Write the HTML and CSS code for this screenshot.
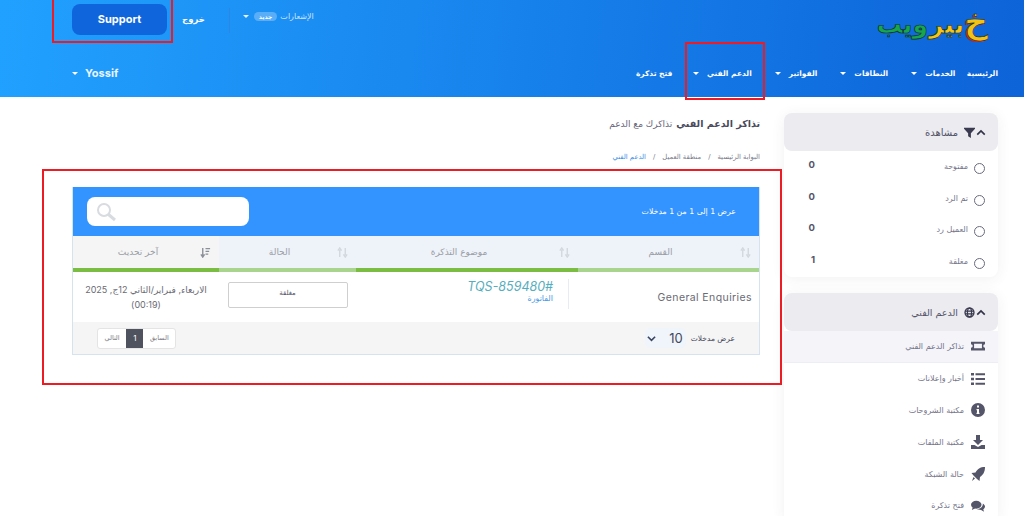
FILE: index.html
```html
<!DOCTYPE html>
<html lang="ar" dir="rtl">
<head>
<meta charset="utf-8">
<title>تذاكر الدعم الفني</title>
<link rel="stylesheet" href="styles.css">
</head>
<body>
<header class="header">
  <div class="top-row">
    <div class="logo"><span class="logo-kh">خ</span><span class="logo-y">بير</span><span class="logo-g">ويب</span></div>
    <div class="top-actions">
      <div class="notif"><span>الإشعارات</span><span class="badge">جديد</span><i class="caret caret-dim"></i></div>
      <span class="top-divider"></span>
      <a class="logout">خروج</a>
      <a class="support">Support</a>
    </div>
  </div>
  <div class="nav-row">
    <nav class="nav">
      <a class="nav-item nav-first">الرئيسية</a>
      <a class="nav-item">الخدمات<i class="caret"></i></a>
      <a class="nav-item">النطاقات<i class="caret"></i></a>
      <a class="nav-item">الفواتير<i class="caret"></i></a>
      <a class="nav-item">الدعم الفني<i class="caret"></i></a>
      <a class="nav-item nav-last">فتح تذكرة</a>
    </nav>
    <a class="user">Yossif<i class="caret"></i></a>
  </div>
</header>

<div class="layout">
  <aside class="sidebar">
    <section class="panel">
      <h3 class="panel-head">
        <svg class="chev" viewBox="0 0 12 8"><path d="M1.500 6.500 6 2l4.500 4.500" fill="none" stroke="#33334a" stroke-width="2"/></svg>
        <svg class="head-icon" viewBox="0 0 16 16"><path d="M0 1h16v1.500L10 9v7l-4-2.500V9L0 2.500z" fill="#3a3a50"/></svg>
        <span>مشاهدة</span>
      </h3>
      <ul class="filter-list">
        <li class="filter"><i class="radio"></i><span class="filter-name">مفتوحة</span><b class="count">0</b></li>
        <li class="filter"><i class="radio"></i><span class="filter-name">تم الرد</span><b class="count">0</b></li>
        <li class="filter"><i class="radio"></i><span class="filter-name">العميل رد</span><b class="count">0</b></li>
        <li class="filter"><i class="radio"></i><span class="filter-name">مغلقة</span><b class="count">1</b></li>
      </ul>
    </section>
    <section class="panel">
      <h3 class="panel-head">
        <svg class="chev" viewBox="0 0 12 8"><path d="M1.500 6.500 6 2l4.500 4.500" fill="none" stroke="#33334a" stroke-width="2"/></svg>
        <svg class="head-icon" viewBox="0 0 16 16"><circle cx="8" cy="8" r="6.500" fill="none" stroke="#3a3a50" stroke-width="2"/><ellipse cx="8" cy="8" rx="3" ry="6.500" fill="none" stroke="#3a3a50" stroke-width="1.800"/><path d="M1.500 6h13M1.500 10h13" stroke="#3a3a50" stroke-width="1.800"/></svg>
        <span class="head-narrow">الدعم الفني</span>
      </h3>
      <ul class="menu-list">
        <li class="menu-item menu-active"><svg class="menu-icon" viewBox="0 0 16 12"><path fill-rule="evenodd" d="M0 1h16v3a2 2 0 0 0 0 4v3H0V8a2 2 0 0 0 0-4zM3.500 3.500v5h9v-5z" fill="#55556a"/></svg><span>تذاكر الدعم الفني</span></li>
        <li class="menu-item"><svg class="menu-icon" viewBox="0 0 14 12"><path d="M0 0h3v2.500H0zM4.500 .3H14v2H4.500zM0 4.700h3v2.500H0zM4.500 5H14v2H4.500zM0 9.500h3V12H0zM4.500 9.800H14v2H4.500z" fill="#55556a"/></svg><span>أخبار وإعلانات</span></li>
        <li class="menu-item"><svg class="menu-icon" viewBox="0 0 14 14"><path fill-rule="evenodd" d="M7 0a7 7 0 1 1 0 14A7 7 0 0 1 7 0zM6 2.500v2h2v-2zM5.500 6v1.200H6v2.600h-.5V11h3V9.800H8V6z" fill="#55556a"/></svg><span>مكتبة الشروحات</span></li>
        <li class="menu-item"><svg class="menu-icon" viewBox="0 0 14 14"><path d="M5 0h4v5h3L7 10 2 5h3zM0 10h3.500L7 12l3.500-2H14v4H0z" fill="#55556a"/></svg><span>مكتبة الملفات</span></li>
        <li class="menu-item"><svg class="menu-icon" viewBox="0 0 14 14"><path d="M14 0c0 5-2 8-5 10l-.5 4-2.500-2-3.500-3.500L.5 6 4.500 5.500C6.500 2 9 0 14 0zM2.500 10 4 11.500 1 14z" fill="#55556a"/></svg><span>حالة الشبكة</span></li>
        <li class="menu-item"><svg class="menu-icon" viewBox="0 0 16 13"><ellipse cx="6" cy="5" rx="6" ry="4.500" fill="#55556a"/><path d="M2 8 1 11l4-2z" fill="#55556a"/><path d="M13.500 3.500C15 4.500 16 5.800 16 7.200c0 1.300-.8 2.400-2 3.200l1 2.600-3.500-2C9 11 7.500 10.500 6.500 10c4 0 7.500-2.500 7-6.500z" fill="#55556a"/></svg><span>فتح تذكرة</span></li>
      </ul>
    </section>
  </aside>

  <main class="main">
    <div class="title-line"><h1 class="title">تذاكر الدعم الفني</h1><small class="subtitle">تذاكرك مع الدعم</small></div>
    <div class="crumbs"><span>البوابة الرئيسية</span><i>/</i><span>منطقة العميل</span><i>/</i><a>الدعم الفني</a></div>

    <div class="card">
      <div class="toolbar">
        <span class="info">عرض 1 إلى 1 من 1 مدخلات</span>
        <div class="search"><svg class="search-icon" viewBox="0 0 20 20"><circle cx="8" cy="8" r="6" fill="none" stroke="#d8dbdf" stroke-width="2"/><path d="M12.500 12.500 19 18" stroke="#d8dbdf" stroke-width="3"/></svg></div>
      </div>
      <table class="table">
        <thead>
          <tr>
            <th class="col-dept th-light"><div class="th-in"><svg class="sort" viewBox="0 0 12 12"><path d="M3 11V3M1 4l2-3 2 3M9 1v8M7 8l2 3 2-3" fill="none" stroke="#d3d7de" stroke-width="1.500"/></svg><span>القسم</span></div></th>
            <th class="col-subj"><div class="th-in"><svg class="sort" viewBox="0 0 12 12"><path d="M3 11V3M1 4l2-3 2 3M9 1v8M7 8l2 3 2-3" fill="none" stroke="#d3d7de" stroke-width="1.500"/></svg><span>موضوع التذكرة</span></div></th>
            <th class="col-status th-light"><div class="th-in"><svg class="sort" viewBox="0 0 12 12"><path d="M3 11V3M1 4l2-3 2 3M9 1v8M7 8l2 3 2-3" fill="none" stroke="#d3d7de" stroke-width="1.500"/></svg><span>الحالة</span></div></th>
            <th class="col-date th-sorted"><div class="th-in"><svg class="sort" viewBox="0 0 12 12"><path d="M3 1v9M1 8l2 3 2-3" fill="none" stroke="#8a8f98" stroke-width="1.500"/><path d="M6 1h5v1.500H6zM6 4h4v1.500H6zM6 7h3v1.500H6z" fill="#8a8f98"/></svg><span>آخر تحديث</span></div></th>
          </tr>
        </thead>
        <tbody>
          <tr>
            <td class="cell-dept">General Enquiries</td>
            <td class="cell-subj"><div class="subj-in"><a class="ticket-id">#TQS-859480</a><a class="ticket-sub">الفاتورة</a></div></td>
            <td class="cell-status"><span class="status">مغلقة</span></td>
            <td class="cell-date">الاربعاء, فبراير/الثاني 12ج, 2025 (00:19)</td>
          </tr>
        </tbody>
      </table>
      <div class="tfoot">
        <div class="length"><span class="length-label">عرض مدخلات</span><span class="select"><span>10</span><svg class="select-arrow" viewBox="0 0 10 7"><path d="M1 1.500 5 5.500 9 1.500" fill="none" stroke="#3a4560" stroke-width="1.800"/></svg></span></div>
        <div class="pager"><a class="page">السابق</a><a class="page page-on">1</a><a class="page">التالي</a></div>
      </div>
    </div>
  </main>
</div>

<div class="mark mark-support"></div>
<div class="mark mark-nav"></div>
<div class="mark mark-table"></div>
</body>
</html>
```

FILE: styles.css
```css
* { box-sizing: border-box; }
html, body { margin: 0; padding: 0; }
body {
  position: relative;
  height: 516px;
  overflow: hidden;
  background: #fff;
  font-family: "DejaVu Sans", "Inter", sans-serif;
  color: #55556a;
}
ul { list-style: none; margin: 0; padding: 0; }
h1, h3 { margin: 0; font-weight: 400; }

/* header */
.header {
  height: 97px;
  background: linear-gradient(97deg, #21a1ff 0%, #0d63d8 100%);
  padding: 0 14px 0 0;
  color: #fff;
}
.top-row { display: flex; justify-content: space-between; height: 47px; padding-left: 72px; }
.logo {
  display: flex;
  align-items: center;
  width: 112px;
  margin-right: 22px;
  height: 44px;
  font-family: "DejaVu Sans", sans-serif;
  font-weight: 700;
  white-space: nowrap;
  -webkit-text-stroke: .7px #14301a;
}
.logo-kh { font-size: 33px; color: #f3c215; line-height: 44px; text-shadow: -1.500px 1px 0 #d5222a; }
.logo-y { font-size: 25px; color: #f5c518; margin-top: 4px; }
.logo-g { font-size: 25px; color: #17a64f; margin-right: 1px; margin-top: 4px; }
.top-actions { display: flex; align-items: flex-start; padding-top: 4px; }
.notif { display: flex; align-items: center; height: 31px; font-size: 8px; color: #cfe4fb; margin-top: -3px; }
.badge {
  margin: 0 3px;
  padding: 1px 5px;
  font-size: 6px;
  font-weight: 700;
  color: #fff;
  background: #5aaef8;
  border-radius: 7px;
}
.caret {
  display: inline-block;
  width: 0;
  height: 0;
  margin-right: 8px;
  vertical-align: middle;
  border: 3px solid transparent;
  border-top: 3.500px solid #fff;
  border-bottom: 0;
}
.caret-dim { border-top-color: #e4f0fd; margin-right: 2px; }
.top-divider { width: 1px; height: 25px; margin: 4px 13px 0 24px; background: #2b86e4; }
.logout { font-size: 8.500px; font-weight: 700; line-height: 31px; color: #fff; }
.support {
  width: 95px;
  height: 31px;
  margin-right: 15px;
  border-radius: 8px;
  background: #0f66dc;
  color: #fff;
  text-align: center;
  font: 700 11px/30px "Inter", sans-serif;
  direction: ltr;
}
.nav-row { display: flex; justify-content: space-between; align-items: center; height: 52px; padding-left: 72px; }
.nav { display: flex; align-items: center; }
.nav-item { padding: 0 11.500px; font-size: 7.500px; font-weight: 700; white-space: nowrap; color: #fff; }
.nav-first { padding-left: 0; padding-right: 12px; }
.nav-last { padding-right: 9px; }
.user { display: flex; align-items: center; font: 700 11px "Inter", sans-serif; color: #eaf4ff; }
.user .caret { margin-right: 7px; }

/* layout */
.layout { display: flex; align-items: flex-start; padding: 16px 26px 0 0; }
.sidebar { width: 214px; flex: none; display: flex; flex-direction: column; gap: 16px; }
.panel { background: #fff; border-radius: 8px; box-shadow: 0 2px 14px rgba(60, 60, 90, .07); }
.panel-head {
  display: flex;
  align-items: center;
  height: 38px;
  padding: 0 12px 0 0;
  background: #ebebf0;
  border-radius: 8px;
  font-size: 10px;
  color: #55556a;
}
.head-narrow { font-size: 9.500px; }
.chev { width: 10px; height: 7px; }
.head-icon { width: 11px; height: 11px; margin: 0 1px 0 6px; }
.filter { display: flex; align-items: center; height: 31.500px; padding: 0 13px 0 0; font-size: 8px; color: #75758a; }
.radio { width: 11px; height: 11px; border: 1.300px solid #6a6a80; border-radius: 50%; margin-left: 6px; margin-top: 4px; }
.filter-name { flex: 1; }
.count { width: 31px; font: 700 9.500px "Inter", sans-serif; color: #55556a; margin-top: -4px; }
.menu-item { display: flex; align-items: center; height: 31.800px; padding: 0 13px 0 0; font-size: 8px; color: #75758a; white-space: nowrap; }
.menu-active { background: #f4f4f9; border-bottom: 1px solid #ededf5; }
.menu-icon { width: 14px; height: 14px; margin-left: 7px; flex: none; }

/* main */
.main { width: 688px; margin-right: 24px; flex: none; }
.title-line { display: flex; align-items: baseline; height: 27px; padding-top: 5px; gap: 4px; }
.title { font-size: 9.500px; font-weight: 700; color: #4a4a5c; }
.subtitle { font-size: 9px; color: #66667a; }
.crumbs { display: flex; align-items: center; height: 16px; margin-top: 9px; font-size: 6.800px; color: #7a7a8c; gap: 7px; }
.crumbs i { font-style: normal; }
.crumbs a { color: #3a8ee8; }
.card { margin-top: 22px; border: 1px solid #d5e3f0; border-top: 0; }
.toolbar { display: flex; align-items: center; justify-content: space-between; height: 49px; padding: 0 23px 0 14px; background: #3393ff; }
.info { font-size: 7.800px; color: #fff; }
.search { display: flex; align-items: center; width: 162px; height: 29px; background: #fff; border-radius: 8px; direction: ltr; }
.search-icon { width: 20px; height: 20px; margin-left: 9px; }

.table { width: 100%; border-collapse: collapse; table-layout: fixed; }
.col-dept { width: 181px; }
.col-subj { width: 222px; }
.col-status { width: 137px; }
.table th {
  height: 34px;
  padding: 0;
  background: #eef2f9;
  border-bottom: 4px solid #7abd42;
  font-size: 9px;
  font-weight: 400;
  color: #9a9ea6;
}
.table .th-light { border-bottom-color: #a9d48d; }
.table .th-sorted { background: #f5f5f5; }
.th-in { position: relative; display: flex; align-items: center; justify-content: center; height: 30px; padding: 0 16px 0 0; }
.sort { position: absolute; right: 8px; top: 10px; width: 11px; height: 11px; }
.table td { height: 52px; padding: 0; vertical-align: middle; }
.table .cell-dept { padding: 0 7px; direction: ltr; text-align: right; font: 400 10.500px "Inter", sans-serif; letter-spacing: .4px; color: #6a6a74; }
.subj-in { display: flex; flex-direction: column; align-items: flex-start; height: 30px; margin: -6px 9px 0 8px; border-right: 1px solid #e8ecf2; }
.ticket-id { padding-right: 15px; font: italic 400 12.500px "Inter", sans-serif; color: #55aebd; }
.ticket-sub { padding-right: 15px; font-size: 8px; color: #4b9be6; }
.cell-status { text-align: center; }
.status {
  display: block;
  width: 120px;
  height: 26px;
  margin: -5px auto 0;
  border: 1.500px solid #cfcfcf;
  border-radius: 2px;
  font-size: 7px;
  line-height: 21px;
  color: #55556a;
}
.table .cell-date { padding: 0 8px; font: 400 9px/15px "Inter", "DejaVu Sans", sans-serif; color: #6a6a74; text-align: center; }
.tfoot { display: flex; align-items: center; justify-content: space-between; height: 32px; padding: 0 24px; background: #f5f5f5; }
.length { display: flex; align-items: center; font-size: 7.500px; color: #44485a; }
.length-label { margin-left: 5px; }
.select { display: flex; align-items: center; gap: 13px; height: 20px; padding: 0 3px 0 2px; background: #f0f4fb; border-radius: 5px; font: 400 13px "Inter", sans-serif; color: #44485a; }
.select-arrow { width: 9px; height: 7px; }
.pager { display: flex; align-items: stretch; height: 21px; border: 1px solid #e4e4e4; border-radius: 3px; background: #fff; }
.page { padding: 0 6.500px; font-size: 6.500px; line-height: 19px; color: #77777f; }
.page-on { padding: 0 7px; background: #4f5360; color: #fff; font: 400 8px/19px "Inter", sans-serif; }

/* annotation rectangles drawn over the screenshot */
.mark { position: absolute; border: 2px solid #ed1c24; pointer-events: none; }
.mark-support { left: 52px; top: -2px; width: 121px; height: 45px; }
.mark-nav { left: 685px; top: 42px; width: 80px; height: 58px; }
.mark-table { left: 42px; top: 169px; width: 740px; height: 216px; }
```
